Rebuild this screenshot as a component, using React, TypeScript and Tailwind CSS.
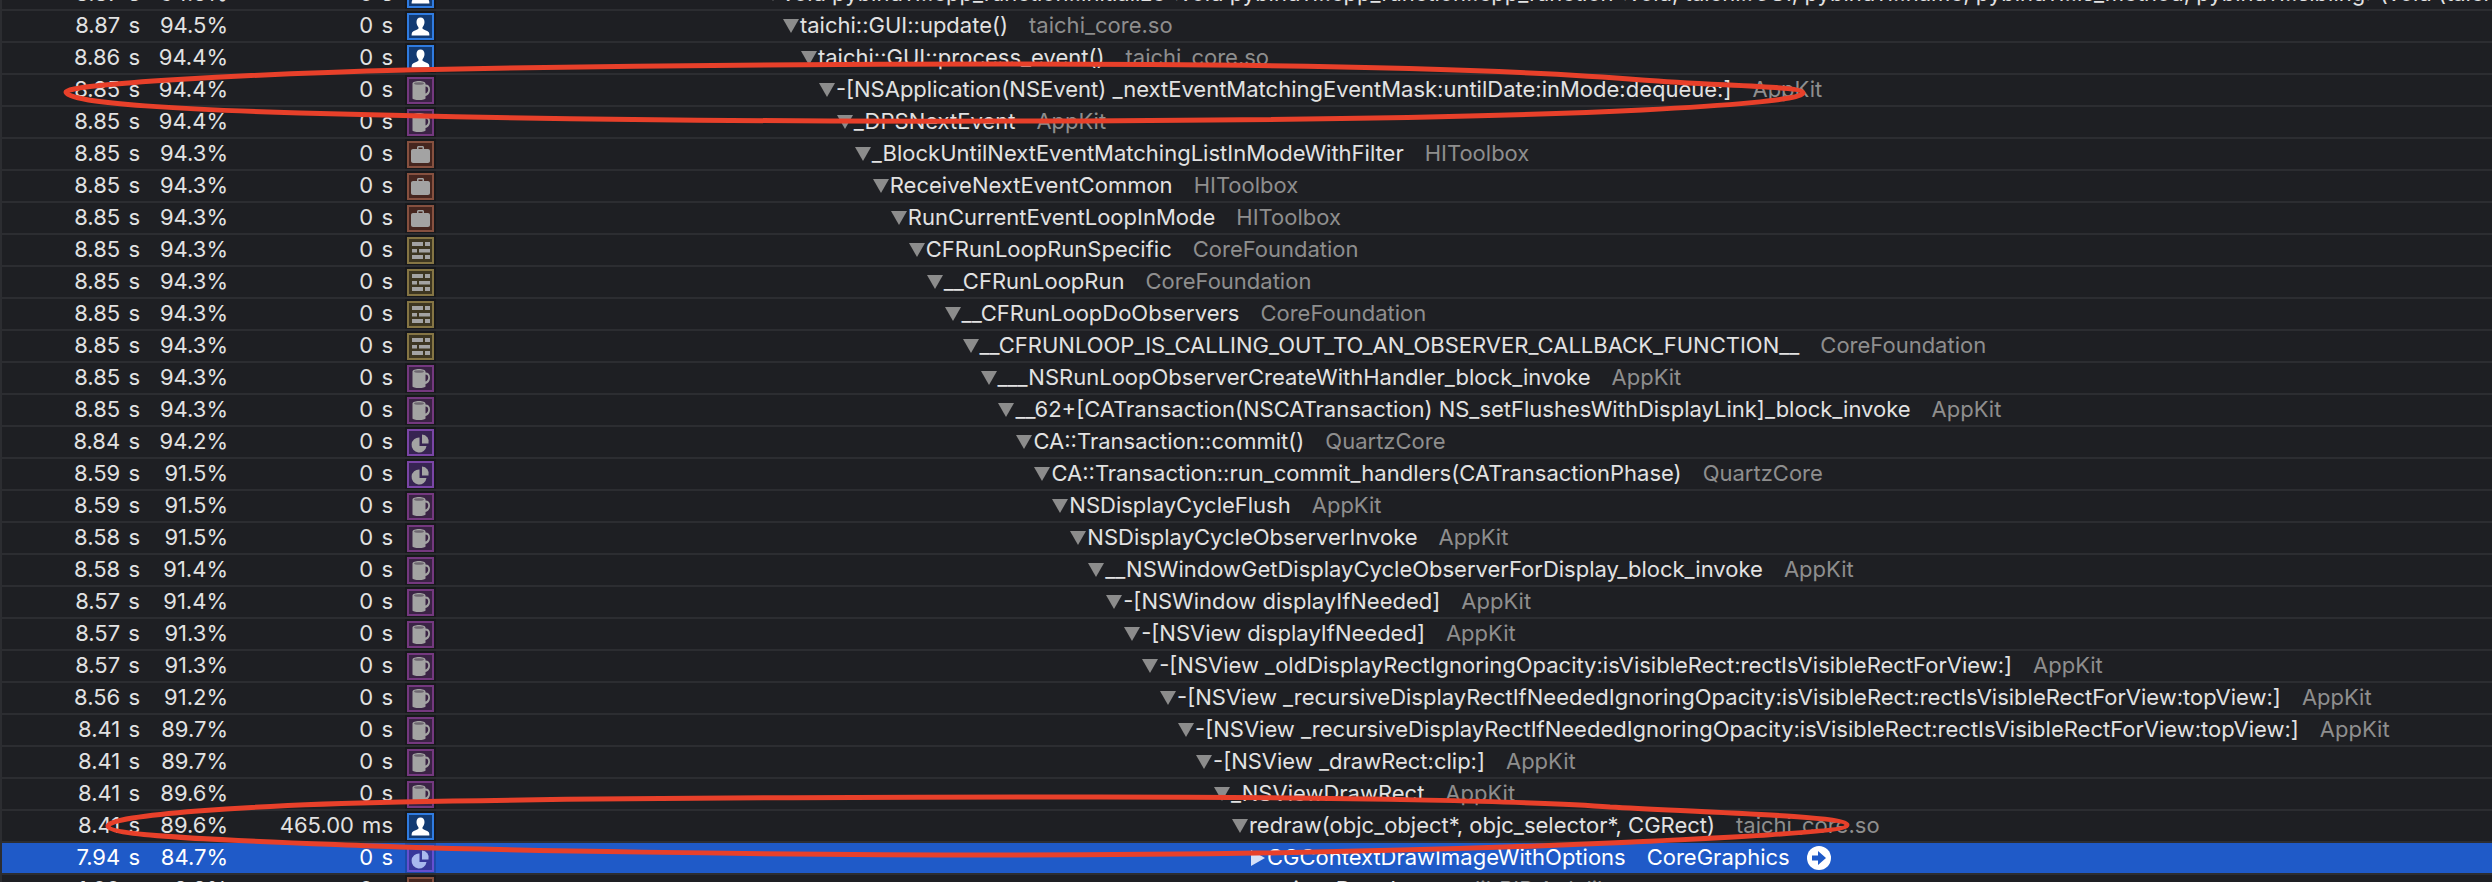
const PYBIND = "void pybind11::cpp_function::initialize<void pybind11::cpp_function::cpp_function<void, taichi::GUI, pybind11::name, pybind11::is_method, pybind11::sibling>(void (taichi::GUI::*)(), pybind11::name const&, pybind11::is_method const&)";
const RECURSIVE = "-[NSView _recursiveDisplayRectIfNeededIgnoringOpacity:isVisibleRect:rectIsVisibleRectForView:topView:]";

type Kind = "user" | "cup" | "case" | "grid" | "pie";
type Row = [string, string, string, Kind, string, string];

const rows: Row[] = [
  ["8.87 s", "94.5%", "0 s", "user", PYBIND, ""],
  ["8.87 s", "94.5%", "0 s", "user", "taichi::GUI::update()", "taichi_core.so"],
  ["8.86 s", "94.4%", "0 s", "user", "taichi::GUI::process_event()", "taichi_core.so"],
  ["8.85 s", "94.4%", "0 s", "cup", "-[NSApplication(NSEvent) _nextEventMatchingEventMask:untilDate:inMode:dequeue:]", "AppKit"],
  ["8.85 s", "94.4%", "0 s", "cup", "_DPSNextEvent", "AppKit"],
  ["8.85 s", "94.3%", "0 s", "case", "_BlockUntilNextEventMatchingListInModeWithFilter", "HIToolbox"],
  ["8.85 s", "94.3%", "0 s", "case", "ReceiveNextEventCommon", "HIToolbox"],
  ["8.85 s", "94.3%", "0 s", "case", "RunCurrentEventLoopInMode", "HIToolbox"],
  ["8.85 s", "94.3%", "0 s", "grid", "CFRunLoopRunSpecific", "CoreFoundation"],
  ["8.85 s", "94.3%", "0 s", "grid", "__CFRunLoopRun", "CoreFoundation"],
  ["8.85 s", "94.3%", "0 s", "grid", "__CFRunLoopDoObservers", "CoreFoundation"],
  ["8.85 s", "94.3%", "0 s", "grid", "__CFRUNLOOP_IS_CALLING_OUT_TO_AN_OBSERVER_CALLBACK_FUNCTION__", "CoreFoundation"],
  ["8.85 s", "94.3%", "0 s", "cup", "___NSRunLoopObserverCreateWithHandler_block_invoke", "AppKit"],
  ["8.85 s", "94.3%", "0 s", "cup", "__62+[CATransaction(NSCATransaction) NS_setFlushesWithDisplayLink]_block_invoke", "AppKit"],
  ["8.84 s", "94.2%", "0 s", "pie", "CA::Transaction::commit()", "QuartzCore"],
  ["8.59 s", "91.5%", "0 s", "pie", "CA::Transaction::run_commit_handlers(CATransactionPhase)", "QuartzCore"],
  ["8.59 s", "91.5%", "0 s", "cup", "NSDisplayCycleFlush", "AppKit"],
  ["8.58 s", "91.5%", "0 s", "cup", "NSDisplayCycleObserverInvoke", "AppKit"],
  ["8.58 s", "91.4%", "0 s", "cup", "__NSWindowGetDisplayCycleObserverForDisplay_block_invoke", "AppKit"],
  ["8.57 s", "91.4%", "0 s", "cup", "-[NSWindow displayIfNeeded]", "AppKit"],
  ["8.57 s", "91.3%", "0 s", "cup", "-[NSView displayIfNeeded]", "AppKit"],
  ["8.57 s", "91.3%", "0 s", "cup", "-[NSView _oldDisplayRectIgnoringOpacity:isVisibleRect:rectIsVisibleRectForView:]", "AppKit"],
  ["8.56 s", "91.2%", "0 s", "cup", RECURSIVE, "AppKit"],
  ["8.41 s", "89.7%", "0 s", "cup", RECURSIVE, "AppKit"],
  ["8.41 s", "89.7%", "0 s", "cup", "-[NSView _drawRect:clip:]", "AppKit"],
  ["8.41 s", "89.6%", "0 s", "cup", "_NSViewDrawRect", "AppKit"],
  ["8.41 s", "89.6%", "465.00 ms", "user", "redraw(objc_object*, objc_selector*, CGRect)", "taichi_core.so"],
  ["7.94 s", "84.7%", "0 s", "pie", "CGContextDrawImageWithOptions", "CoreGraphics"],
  ["1.00 s", "8.8%", "0 s", "case", "ripc_DrawImage", "libRIP.A.dylib"],
];

const boxes: Record<Kind, string> = {
  user: "border-[#2f7be0] bg-[#123a72]",
  cup: "border-[#74387f] bg-[#3a2344]",
  case: "border-[#86503f] bg-[#46261f]",
  grid: "border-[#857544] bg-[#3d3621]",
  pie: "border-[#7a45a6] bg-[#372452]",
};

const Glyph = ({ kind, selected }: { kind: Kind; selected: boolean }) => {
  const c = kind === "user" ? "#ffffff" : selected ? "#a9b9ee" : "#a3a3a3";
  if (kind === "user")
    return (
      <svg viewBox="0 0 23 23" className="h-full w-full">
        <path fill={c} d="M11.5 2.5c2.6 0 4 2 4 4.6 0 2-.8 3.8-1.8 4.8-.4.5-.3 1.6.3 2.1 1.2 1 4.8 1.800 5.800 3.200.5.8.6 2 .6 3.300H2.600c0-1.300.1-2.500.6-3.300 1-1.400 4.600-2.200 5.800-3.200.6-.5.7-1.600.3-2.100-1-1-1.800-2.800-1.800-4.800 0-2.600 1.400-4.600 4-4.600z" />
      </svg>
    );
  if (kind === "cup")
    return (
      <svg viewBox="0 0 23 23" className="h-full w-full">
        <path fill={c} d="M3.500 4.500C3.500 3 6.500 2 10 2s6.500 1 6.500 2.500v1c2.800 0 4.500 1.800 4.500 5 0 3.500-2 6-4.500 6.500v2.500C16.500 20.300 13.500 21 10 21s-6.500-.7-6.500-1.500z" />
        <path fill="#3a2344" d="M16.500 7.500v7c1.600-.5 2.700-2 2.700-4 0-2-1-3-2.700-3z" />
        <ellipse cx="10" cy="4.500" rx="5" ry="1.300" fill="#6d6670" />
      </svg>
    );
  if (kind === "case")
    return (
      <svg viewBox="0 0 23 23" className="h-full w-full">
        <path fill={c} fillRule="evenodd" d="M8 6V4.500C8 3.700 8.700 3 9.500 3h4c.8 0 1.500.7 1.500 1.500V6h4c1.100 0 2 .9 2 2v10c0 1.100-.9 2-2 2H4c-1.100 0-2-.9-2-2V8c0-1.100.9-2 2-2zm1.500 0h4V4.500h-4z" />
      </svg>
    );
  if (kind === "grid")
    return (
      <svg viewBox="0 0 23 23" className="h-full w-full" fill={c}>
        <rect x="3" y="3" width="11" height="4" />
        <rect x="16" y="3" width="5" height="4" />
        <rect x="3" y="10" width="5" height="3.500" />
        <rect x="10" y="10" width="11" height="3.500" />
        <rect x="3" y="16" width="11" height="4" />
        <rect x="16" y="16" width="5" height="4" />
      </svg>
    );
  return (
    <svg viewBox="0 0 23 23" className="h-full w-full" fill={c}>
      <path d="M10.500 6.500A7.500 7.500 0 1 0 17.500 15h-7z" />
      <path d="M13 3.500a7 7 0 0 1 6.500 9H13z" />
    </svg>
  );
};

const Icon = ({ kind, selected }: { kind: Kind; selected: boolean }) => (
  <div className={`flex h-full w-[31px] shrink-0 items-center justify-center ${selected ? "bg-[#1c4aa8]" : "bg-[#17181b]"}`}>
    <div className={`h-[27px] w-[27px] border-2 ${selected ? "border-[#6450d0] bg-[#38389a]" : boxes[kind]}`}>
      <Glyph kind={kind} selected={selected} />
    </div>
  </div>
);

const Disclosure = ({ open, selected }: { open: boolean; selected: boolean }) => (
  <span className="flex w-[18px] shrink-0 items-center justify-center pt-[2px]">
    {open ? (
      <svg width="16" height="14" viewBox="0 0 16 14">
        <path d="M0 0h16L8 14z" fill="#8c8c8c" />
      </svg>
    ) : (
      <svg width="14" height="16" viewBox="0 0 14 16">
        <path d="M0 0l14 8L0 16z" fill={selected ? "#d5e0f7" : "#8c8c8c"} />
      </svg>
    )}
  </span>
);

const RevealArrow = () => (
  <svg width="24" height="24" viewBox="0 0 24 24" className="ml-[17px] mt-[2px] shrink-0">
    <circle cx="12" cy="12" r="12" fill="#ffffff" />
    <path d="M5 9.500h6V5l8 7-8 7v-4.500H5z" fill="#1f5ac8" />
  </svg>
);

export default function App() {
  return (
    <div className="relative h-[882px] w-[2492px] overflow-hidden bg-[#1e1f23] font-['Inter',sans-serif] text-[22px]">
      <div className="-mt-[21px] border-l-2 border-[#2c2d31]">
        {rows.map((r, i) => {
          const selected = i === 27;
          const last = i === 28;
          return (
            <div
              key={i}
              className={`flex h-[32px] items-stretch border-b-2 border-[#2c2d31] whitespace-nowrap ${selected ? "bg-[#1f5ac8] text-white" : "text-[#e2e2e2]"}`}
            >
              <div className="flex h-[30px] w-[138px] shrink-0 items-center justify-end pb-[2px] [word-spacing:2px]">{r[0]}</div>
              <div className="flex h-[30px] w-[88px] shrink-0 items-center justify-end pb-[2px]">{r[1]}</div>
              <div className="flex h-[30px] w-[165px] shrink-0 items-center justify-end pb-[2px] [word-spacing:2px]">{r[2]}</div>
              <div className="ml-[12px] h-[30px]">
                <Icon kind={r[3]} selected={selected} />
              </div>
              <div className="flex h-[30px] min-w-0 flex-1 items-center overflow-hidden pb-[2px]" style={{ paddingLeft: 328 + 17.96 * i }}>
                <Disclosure open={!selected && !last} selected={selected} />
                <span>{r[4]}</span>
                {r[5] && <span className={`ml-[21px] ${selected ? "text-white" : "text-[#8e8e8e]"}`}>{r[5]}</span>}
                {selected && <RevealArrow />}
              </div>
            </div>
          );
        })}
      </div>
      <svg className="absolute left-0 top-0" width="2492" height="882" viewBox="0 0 2492 882" fill="none" stroke="#e8402a" strokeWidth="5" strokeLinejoin="round">
        <path d="M66 92C66 84 250 74 407 70C600 66 800 64 1000 64C1250 64 1500 68 1642 80C1720 86 1803 86 1803 93C1803 100 1720 106 1642 110C1500 117 1250 122 830 121C600 120 407 116 300 113C200 110 66 104 66 92Z" />
        <path d="M108 826C108 815 250 805 400 802C600 798 800 797 1100 797C1350 797 1550 802 1610 807C1700 812 1847 816 1847 825C1847 832 1720 838 1610 843C1450 850 1250 855 1000 855C750 855 500 850 400 847C280 842 108 838 108 826Z" />
      </svg>
    </div>
  );
}
